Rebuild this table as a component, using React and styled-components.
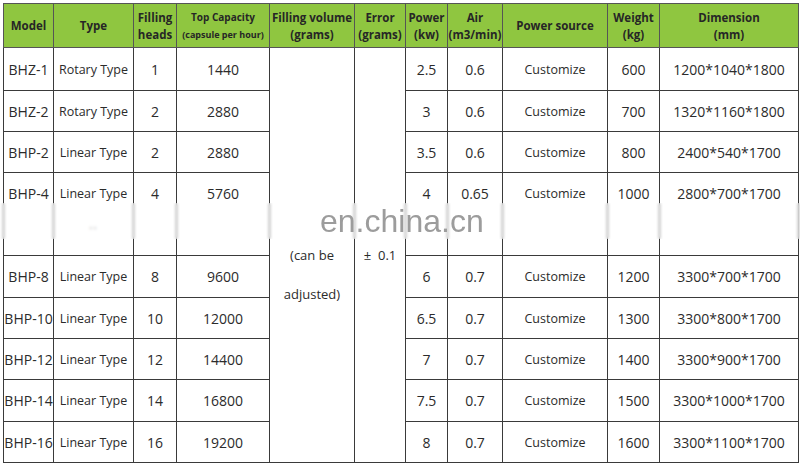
import React from "react";
import styled, { createGlobalStyle } from "styled-components";

const GlobalStyle = createGlobalStyle`
  html, body {
    margin: 0;
    padding: 0;
    background: #fff;
  }
  body {
    font-family: "Open Sans", "Noto Sans", sans-serif;
    color: #2b2b2b;
  }
`;

const Page = styled.div`
  position: relative;
  width: 800px;
  height: 466px;
  padding: 3px 0 0 3px;
  box-sizing: border-box;
  overflow: hidden;
`;

const Table = styled.table`
  border-collapse: collapse;
  table-layout: fixed;
  width: 795px;
`;

const HeadRow = styled.tr`
  height: 44px;
  background: #8fc640;
`;

const HeadCell = styled.th`
  border: 1px solid #555;
  padding: 0;
  text-align: center;
  vertical-align: middle;
  font-size: 11.5px;
  font-weight: 700;
  line-height: 17px;
  color: #262626;
`;

const SmallTitle = styled.div`
  font-size: ${(props) => props.$size || 10}px;
  line-height: 17px;
  white-space: nowrap;
`;

const Row = styled.tr`
  height: ${(props) => props.$h}px;
`;

const Cell = styled.td`
  border: 1px solid #3a3a3a;
  padding: 0;
  text-align: center;
  vertical-align: ${(props) => (props.$top ? "top" : "middle")};
  font-size: 14px;
  line-height: ${(props) => (props.$top ? "41px" : "17px")};
  color: #2b2b2b;
  white-space: nowrap;
`;

const TypeCell = styled(Cell)`
  font-size: 12.5px;
`;

const SpanText = styled.div`
  font-size: 13px;
  line-height: 39px;
  color: #2b2b2b;
  white-space: pre;
`;

const Dots = styled.div`
  font-size: 12px;
  line-height: 30px;
  color: #777;
  letter-spacing: 1px;
`;

const Haze = styled.div`
  position: absolute;
  left: 0;
  right: 0;
  top: 203px;
  height: 36px;
  backdrop-filter: blur(1.5px);
  background: rgba(255, 255, 255, 0.35);
  pointer-events: none;
`;

const Watermark = styled.div`
  position: absolute;
  left: 320px;
  top: 201px;
  font-family: "Liberation Sans", Arial, sans-serif;
  font-size: 32px;
  line-height: 40px;
  color: #9c9c9c;
  pointer-events: none;
`;

const widths = [50, 80, 43, 93, 85, 51, 42, 55, 105, 52, 139];

const rows = [
  ["BHZ-1", "Rotary Type", "1", "1440", "2.5", "0.6", "600", "1200*1040*1800", 43],
  ["BHZ-2", "Rotary Type", "2", "2880", "3", "0.6", "700", "1320*1160*1800", 41],
  ["BHP-2", "Linear Type", "2", "2880", "3.5", "0.6", "800", "2400*540*1700", 41],
  ["BHP-4", "Linear Type", "4", "5760", "4", "0.65", "1000", "2800*700*1700", 83],
  ["BHP-8", "Linear Type", "8", "9600", "6", "0.7", "1200", "3300*700*1700", 42],
  ["BHP-10", "Linear Type", "10", "12000", "6.5", "0.7", "1300", "3300*800*1700", 41],
  ["BHP-12", "Linear Type", "12", "14400", "7", "0.7", "1400", "3300*900*1700", 41],
  ["BHP-14", "Linear Type", "14", "16800", "7.5", "0.7", "1500", "3300*1000*1700", 42],
  ["BHP-16", "Linear Type", "16", "19200", "8", "0.7", "1600", "3300*1100*1700", 41],
];

const App = () => {
  return (
    <>
      <GlobalStyle />
      <Page>
        <Table>
          <colgroup>
            {widths.map((w, i) => (
              <col key={i} style={{ width: w }} />
            ))}
          </colgroup>
          <thead>
            <HeadRow>
              <HeadCell>Model</HeadCell>
              <HeadCell>Type</HeadCell>
              <HeadCell>
                Filling
                <br />
                heads
              </HeadCell>
              <HeadCell>
                <SmallTitle $size={10}>Top Capacity</SmallTitle>
                <SmallTitle $size={9}>(capsule per hour)</SmallTitle>
              </HeadCell>
              <HeadCell>
                Filling volume
                <br />
                (grams)
              </HeadCell>
              <HeadCell>
                Error
                <br />
                (grams)
              </HeadCell>
              <HeadCell>
                Power
                <br />
                (kw)
              </HeadCell>
              <HeadCell>
                Air
                <br />
                (m3/min)
              </HeadCell>
              <HeadCell>Power source</HeadCell>
              <HeadCell>
                Weight
                <br />
                (kg)
              </HeadCell>
              <HeadCell>
                Dimension
                <br />
                (mm)
              </HeadCell>
            </HeadRow>
          </thead>
          <tbody>
            {rows.map((r, i) => {
              const tall = r[8] > 60;
              return (
                <Row key={r[0]} $h={r[8]}>
                  <Cell $top={tall}>{r[0]}</Cell>
                  <TypeCell $top={tall}>
                    {r[1]}
                    {tall && <Dots>··</Dots>}
                  </TypeCell>
                  <Cell $top={tall}>{r[2]}</Cell>
                  <Cell $top={tall}>{r[3]}</Cell>
                  {i === 0 && (
                    <>
                      <Cell rowSpan={rows.length}>
                        <SpanText>&nbsp;</SpanText>
                        <SpanText>(can be</SpanText>
                        <SpanText>adjusted)</SpanText>
                      </Cell>
                      <Cell rowSpan={rows.length}>
                        <SpanText>{"±  0.1"}</SpanText>
                      </Cell>
                    </>
                  )}
                  <Cell $top={tall}>{r[4]}</Cell>
                  <Cell $top={tall}>{r[5]}</Cell>
                  <TypeCell $top={tall}>Customize</TypeCell>
                  <Cell $top={tall}>{r[6]}</Cell>
                  <Cell $top={tall}>{r[7]}</Cell>
                </Row>
              );
            })}
          </tbody>
        </Table>
        <Haze />
        <Watermark>en.china.cn</Watermark>
      </Page>
    </>
  );
};

export default App;
